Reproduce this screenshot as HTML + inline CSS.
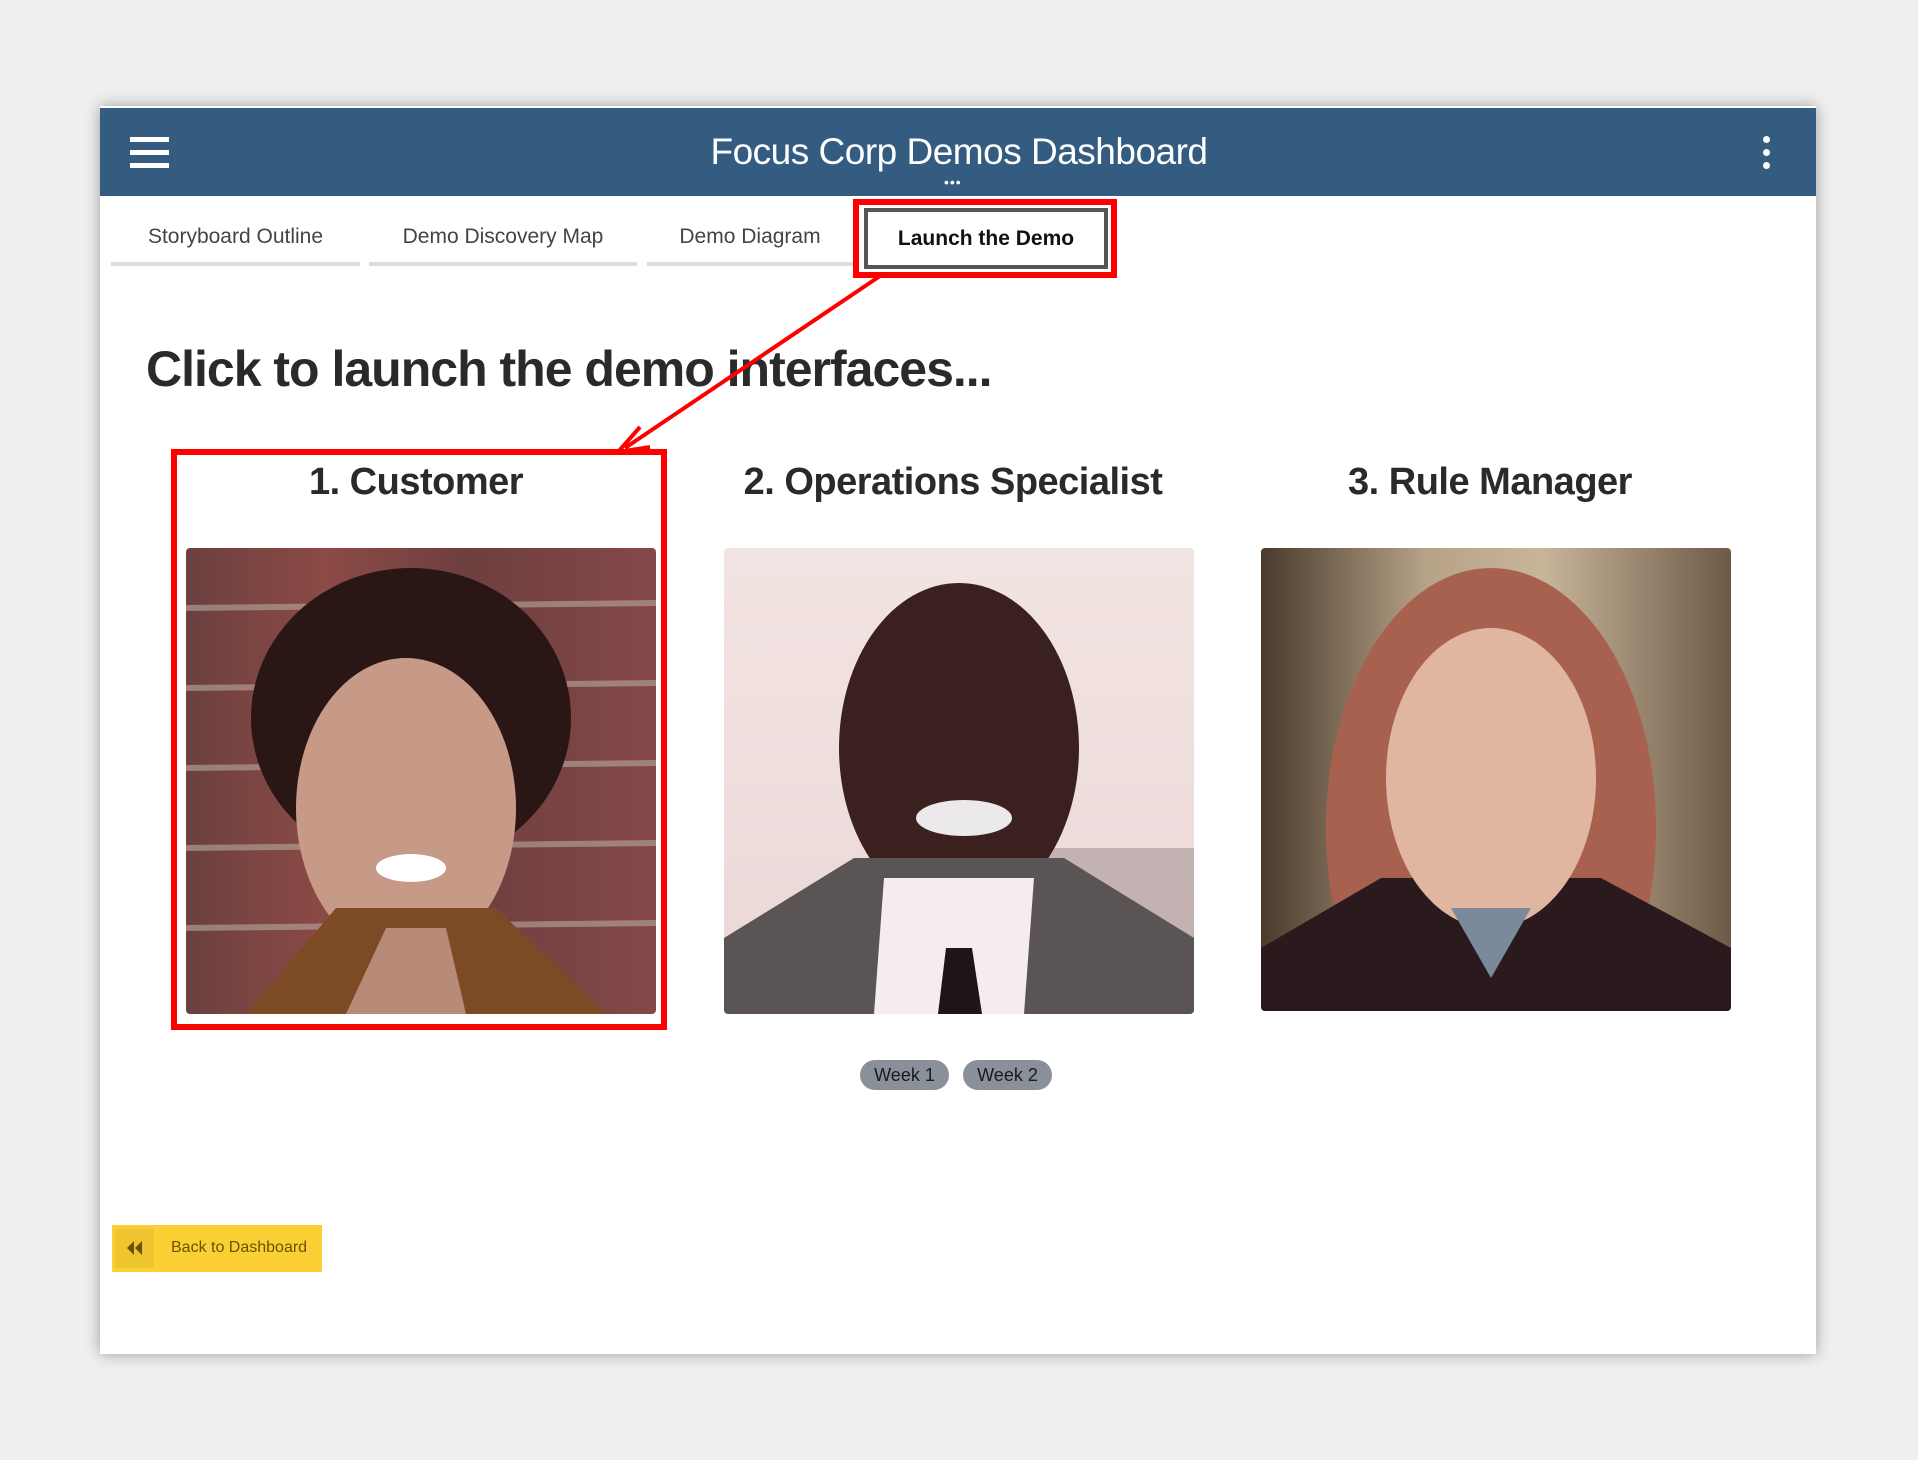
<!DOCTYPE html>
<html><head><style>
*{margin:0;padding:0;box-sizing:border-box}
body{width:1918px;height:1460px;background:#efefef;font-family:"Liberation Sans",sans-serif;position:relative;overflow:hidden}
.card{position:absolute;left:100px;top:106px;width:1716px;height:1248px;background:#fff;box-shadow:0 0 14px rgba(0,0,0,.35)}
.hdr{position:absolute;left:100px;top:108px;width:1716px;height:88px;background:#335c80}
.abs{position:absolute}
.tab{position:absolute;top:225px;font-size:21px;color:#444;text-align:center}
.ul{position:absolute;top:262px;height:4px;background:#ddd}
h2{position:absolute;font-size:38px;font-weight:bold;color:#2a2a2a;text-align:center;width:470px;top:461px;letter-spacing:-.5px}
.ph{position:absolute;top:548px;width:470px;height:466px;border-radius:4px;overflow:hidden}
.pill{position:absolute;top:1060px;height:30px;width:89px;border-radius:15px;background:#8a9099;color:#1a1a1a;font-size:18px;text-align:center;line-height:30px}
</style></head><body>
<div class="card"></div>
<div class="hdr"></div>
<div class="abs" style="left:130px;top:137px;width:39px;height:5px;background:#fff;box-shadow:0 13px 0 #fff,0 26px 0 #fff"></div>
<div class="abs" style="left:0;width:1918px;top:131px;text-align:center;color:#fff;font-size:37px;letter-spacing:-.5px">Focus Corp Demos Dashboard</div>
<div class="abs" style="left:944px;top:179px;color:#fff;font-size:14px;letter-spacing:1px;line-height:6px">•••</div>
<div class="abs" style="left:1763px;top:136px;width:7px;height:7px;border-radius:50%;background:#fff;box-shadow:0 13px 0 #fff,0 26px 0 #fff"></div>

<div class="tab" style="left:111px;width:249px">Storyboard Outline</div>
<div class="tab" style="left:369px;width:268px">Demo Discovery Map</div>
<div class="tab" style="left:647px;width:206px">Demo Diagram</div>
<div class="ul" style="left:111px;width:249px"></div>
<div class="ul" style="left:369px;width:268px"></div>
<div class="ul" style="left:647px;width:210px"></div>
<div class="abs" style="left:853px;top:199px;width:264px;height:79px;border:6px solid #f00"></div>
<div class="abs" style="left:864px;top:208px;width:244px;height:61px;border:4px solid #555;text-align:center;line-height:53px;font-size:21px;font-weight:bold;color:#111">Launch the Demo</div>

<div class="abs" style="left:146px;top:340px;font-size:50px;font-weight:bold;color:#2a2a2a;letter-spacing:-1px">Click to launch the demo interfaces...</div>

<h2 style="left:181px">1. Customer</h2>
<h2 style="left:718px;width:470px">2. Operations Specialist</h2>
<h2 style="left:1255px">3. Rule Manager</h2>

<div class="ph" style="left:186px;background:linear-gradient(90deg,#6b4040,#8c4a45 30%,#6e3f3f 60%,#854848)">
<svg width="470" height="466">
<g stroke="#b9a9a0" stroke-width="6" opacity=".6"><line x1="0" y1="60" x2="470" y2="55"/><line x1="0" y1="140" x2="470" y2="135"/><line x1="0" y1="220" x2="470" y2="215"/><line x1="0" y1="300" x2="470" y2="295"/><line x1="0" y1="380" x2="470" y2="375"/></g>
<ellipse cx="225" cy="170" rx="160" ry="150" fill="#2a1614"/>
<ellipse cx="220" cy="260" rx="110" ry="150" fill="#c79a88"/>
<path d="M60 466 L150 360 L310 360 L420 466Z" fill="#7c4a24"/>
<path d="M160 466 L200 380 L260 380 L280 466Z" fill="#b88a78"/>
<ellipse cx="225" cy="320" rx="35" ry="14" fill="#fff"/>
</svg></div>

<div class="ph" style="left:724px;background:linear-gradient(#f2e4e2,#ead7d6)">
<svg width="470" height="466">
<rect x="300" y="300" width="170" height="166" fill="#9a8a8a" opacity=".5"/>
<ellipse cx="235" cy="200" rx="120" ry="165" fill="#3a2120"/>
<path d="M0 466 L0 390 L130 310 L340 310 L470 390 L470 466Z" fill="#5b5455"/>
<path d="M150 466 L160 330 L310 330 L300 466Z" fill="#f5eded"/>
<path d="M222 400 L248 400 L258 466 L214 466Z" fill="#1e1517"/>
<ellipse cx="240" cy="270" rx="48" ry="18" fill="#fff" opacity=".9"/>
</svg></div>

<div class="ph" style="left:1261px;height:463px;background:linear-gradient(90deg,#4a3a2c,#b5a287 35%,#c8b59a 60%,#6d5a48)">
<svg width="470" height="463">
<ellipse cx="230" cy="280" rx="165" ry="260" fill="#a8614e"/>
<path d="M0 463 L0 400 L120 330 L340 330 L470 400 L470 463Z" fill="#2a1a1e"/>
<ellipse cx="230" cy="230" rx="105" ry="150" fill="#e0b6a0"/>
<path d="M190 360 L230 430 L270 360Z" fill="#7b8a9a"/>
</svg></div>

<div class="abs" style="left:171px;top:449px;width:496px;height:581px;border:6px solid #f00"></div>

<svg class="abs" style="left:0;top:0" width="1918" height="1460"><line x1="880" y1="276" x2="625" y2="448" stroke="#f00" stroke-width="4"/><path d="M618 452 L640 427 M618 452 L650 447" stroke="#f00" stroke-width="4" fill="none"/></svg>

<div class="pill" style="left:860px">Week 1</div>
<div class="pill" style="left:963px">Week 2</div>

<div class="abs" style="left:112px;top:1225px;width:210px;height:47px;background:#fbd035"></div>
<div class="abs" style="left:115px;top:1229px;width:39px;height:39px;background:#eec52f"></div>
<svg class="abs" style="left:126px;top:1240px" width="18" height="16"><path d="M8 1 L1 8 L8 15 Z M16 1 L9 8 L16 15 Z" fill="#6a5200"/></svg>
<div class="abs" style="left:171px;top:1239px;color:#6a5200;font-size:16px">Back to Dashboard</div>
</body></html>
